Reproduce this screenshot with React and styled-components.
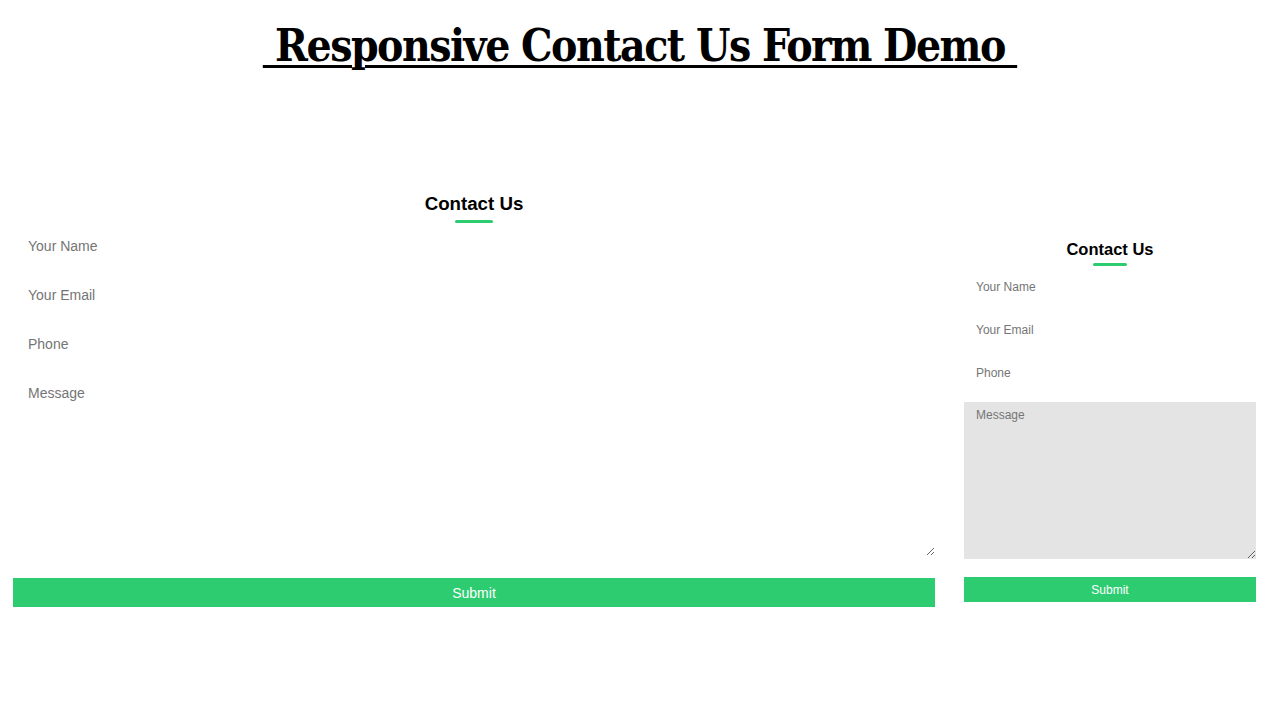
import React from 'react';
import styled, { createGlobalStyle } from 'styled-components';

const GlobalStyle = createGlobalStyle`
  body {
    margin: 0;
    background: #fff;
    font-family: "Liberation Sans", Arial, sans-serif;
  }
  * { box-sizing: border-box; }
`;

const Title = styled.h1`
  margin: 0;
  padding-top: 18px;
  text-align: center;
  font-family: "DejaVu Serif", "Liberation Serif", serif;
  font-stretch: condensed;
  font-weight: 700;
  font-size: 44px;
  letter-spacing: -1.5px;
  line-height: 56px;
  color: #000;
  text-decoration: underline;
  text-decoration-thickness: 3px;
  text-underline-offset: 4px;
  white-space: pre;
`;

const Demos = styled.div`
  display: flex;
  align-items: flex-start;
  gap: 29px;
  padding: 0 24px 0 13px;
  margin-top: 118px;
`;

const Form = styled.form`
  width: ${(p) => p.$width}px;
  margin-top: ${(p) => p.$offset || 0}px;
  display: flex;
  flex-direction: column;
`;

const Heading = styled.h2`
  margin: 0;
  text-align: center;
  font-size: ${(p) => (p.$small ? 16.5 : 18.7)}px;
  line-height: ${(p) => (p.$small ? 22 : 24)}px;
  font-weight: 700;
  color: #000;
`;

const Bar = styled.span`
  display: block;
  width: ${(p) => (p.$small ? 34 : 38)}px;
  height: 3px;
  margin: ${(p) => (p.$small ? '3px auto 0' : '4px auto 0')};
  border-radius: 2px;
  background: #2ecc71;
`;

const Field = styled.input`
  display: block;
  width: 100%;
  height: ${(p) => (p.$small ? 43 : 49)}px;
  padding: 0 ${(p) => (p.$small ? 12 : 15)}px ${(p) => (p.$small ? 2 : 4)}px;
  border: none;
  outline: none;
  background: transparent;
  font-family: "Liberation Sans", Arial, sans-serif;
  font-size: ${(p) => (p.$small ? 12 : 14)}px;
  color: #333;
  &::placeholder { color: #757575; }
`;

const Area = styled.textarea`
  display: block;
  width: 100%;
  height: ${(p) => (p.$small ? 157 : 185)}px;
  margin-top: ${(p) => (p.$small ? 7 : 1)}px;
  padding: ${(p) => (p.$small ? '6px 12px' : '14px 15px')};
  border: none;
  outline: none;
  resize: both;
  background: ${(p) => (p.$small ? '#e4e4e4' : 'transparent')};
  font-family: "Liberation Sans", Arial, sans-serif;
  font-size: ${(p) => (p.$small ? 12 : 14)}px;
  color: #333;
  &::placeholder { color: #757575; }
`;

const Submit = styled.button`
  display: block;
  width: 100%;
  height: ${(p) => (p.$small ? 25 : 29)}px;
  margin-top: ${(p) => (p.$small ? 18 : 22)}px;
  border: none;
  background: #2ecc71;
  color: #fff;
  font-family: "Liberation Sans", Arial, sans-serif;
  font-size: ${(p) => (p.$small ? 12 : 14)}px;
  cursor: pointer;
`;

const ContactForm = ({ width, offset, small }) => (
  <Form $width={width} $offset={offset} onSubmit={(e) => e.preventDefault()}>
    <Heading $small={small}>Contact Us</Heading>
    <Bar $small={small} />
    <Field $small={small} type="text" placeholder="Your Name" />
    <Field $small={small} type="email" placeholder="Your Email" />
    <Field $small={small} type="tel" placeholder="Phone" />
    <Area $small={small} placeholder="Message" />
    <Submit $small={small} type="submit">Submit</Submit>
  </Form>
);

export default function App() {
  return (
    <>
      <GlobalStyle />
      <Title> Responsive Contact Us Form Demo </Title>
      <Demos>
        <ContactForm width={922} />
        <ContactForm width={292} offset={46} small />
      </Demos>
    </>
  );
}
